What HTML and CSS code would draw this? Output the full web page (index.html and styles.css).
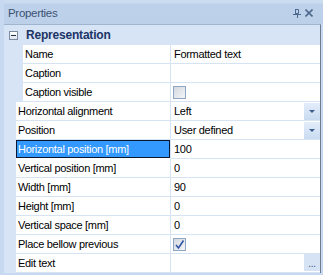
FILE: index.html
```html
<!DOCTYPE html>
<html lang="en">
<head>
  <meta charset="UTF-8" />
  <title>Properties</title>
  <link rel="stylesheet" href="styles.css">
</head>
<body>
  <div class="panel">

    <!-- Title bar with pin / close -->
    <div class="titlebar">
      <span class="title">Properties</span>
      <span class="tools">
        <svg width="8" height="9" viewBox="0 0 8 9" class="tool-icon">
          <path d="M2.5 0.5h3v4h-3z" fill="none" stroke="#4e6a8e"/>
          <path d="M2 0h1v5H2z" fill="#4e6a8e"/>
          <path d="M0 5h8v1H0zM4 6h1v3H4z" fill="#4e6a8e"/>
        </svg>
        <svg width="8" height="8" viewBox="0 0 8 8" class="tool-icon">
          <path d="M0.5 0.5l7 7M7.5 0.5l-7 7" stroke="#4e6a8e" stroke-width="1.6"/>
        </svg>
      </span>
    </div>

    <div class="grid">
      <div class="category">
        <span class="toggle"><span class="minus"></span></span>
        <span class="cat-name">Representation</span>
      </div>

      <div class="row sub"><div class="label">Name</div><div class="value">Formatted text</div></div>
      <div class="row sub"><div class="label">Caption</div><div class="value"></div></div>
      <div class="row sub"><div class="label">Caption visible</div><div class="value"><span class="check"></span></div></div>

      <div class="row"><div class="label">Horizontal alignment</div><div class="value">Left<span class="drop"><span class="arrow"></span></span></div></div>
      <div class="row"><div class="label">Position</div><div class="value">User defined<span class="drop"><span class="arrow"></span></span></div></div>
      <div class="row"><div class="label selected">Horizontal position [mm]</div><div class="value">100</div></div>
      <div class="row"><div class="label">Vertical position [mm]</div><div class="value">0</div></div>
      <div class="row"><div class="label">Width [mm]</div><div class="value">90</div></div>
      <div class="row"><div class="label">Height [mm]</div><div class="value">0</div></div>
      <div class="row"><div class="label">Vertical space [mm]</div><div class="value">0</div></div>
      <div class="row"><div class="label">Place bellow previous</div><div class="value"><span class="check checked">
        <svg width="11" height="11" viewBox="0 0 11 11"><path d="M2 6l2.5 3L9.5 1.5" fill="none" stroke="#2f55a4" stroke-width="1.6"/></svg>
      </span></div></div>
      <div class="row"><div class="label">Edit text</div><div class="value"><span class="dots">...</span></div></div>
    </div>

  </div>
</body>
</html>
```

FILE: styles.css
```css
body {
  margin: 0;
  padding: 0;
  font-family: "Liberation Sans", Arial, sans-serif;
  font-size: 11px;
  letter-spacing: -0.3px;
  background-color: #c6d9f0;
}
.panel {
  width: 323px;
  height: 275px;
  padding-left: 4px;
  box-sizing: border-box;
  overflow: hidden;
}
.titlebar {
  height: 24px;
  display: flex;
  align-items: center;
  justify-content: space-between;
  padding: 2px 10px 0 4px;
  box-sizing: border-box;
  background: linear-gradient(#cbdcf0 0, #cbdcf0 3px, #bed1ea 4px, #bcd0ea 100%);
}
.title {
  color: #3b5273;
  font-size: 11.5px;
}
.tools {
  display: flex;
  align-items: center;
  gap: 4px;
}
.tool-icon {
  display: block;
}
.grid {
  width: 317px;
  border-top: 1px solid #9fb4cf;
  border-right: 1px solid #6e7c8e;
  box-sizing: border-box;
  background-color: #d6e4f5;
}
.category {
  height: 20px;
  display: flex;
  align-items: center;
}
.toggle {
  width: 9px;
  height: 9px;
  margin-left: 5px;
  border: 1px solid #7b8ba1;
  box-sizing: border-box;
  background: linear-gradient(#ffffff, #dfe6ef);
  display: flex;
  align-items: center;
  justify-content: center;
}
.minus {
  width: 5px;
  height: 1px;
  background-color: #1f2f4a;
}
.cat-name {
  margin-left: 8px;
  font-weight: bold;
  font-size: 12px;
  color: #1c3466;
  letter-spacing: -0.2px;
}
.row {
  display: flex;
  height: 19px;
  padding-left: 12px;
}
.row.sub {
  padding-left: 19px;
}
.label {
  width: 155px;
  height: 19px;
  box-sizing: border-box;
  padding-left: 2px;
  line-height: 18px;
  background-color: #fff;
  color: #000;
  border-right: 1px solid #d6e3f3;
  border-bottom: 1px solid #d6e3f3;
  white-space: nowrap;
}
.row.sub .label {
  width: 148px;
}
.label.selected {
  background-color: #3399ff;
  color: #fff;
  box-shadow: inset 0 0 0 1px #0b1830;
  border-bottom-color: #fff;
}
.value {
  flex: 1;
  height: 19px;
  box-sizing: border-box;
  padding-left: 3px;
  line-height: 18px;
  background-color: #fff;
  border-bottom: 1px solid #d6e3f3;
  display: flex;
  align-items: center;
  position: relative;
}
.drop {
  position: absolute;
  right: 0;
  top: 1px;
  width: 16px;
  height: 17px;
  background: linear-gradient(#e3edf9, #c9dbf1);
  display: flex;
  align-items: center;
  justify-content: center;
}
.arrow {
  width: 0;
  height: 0;
  border-left: 3px solid transparent;
  border-right: 3px solid transparent;
  border-top: 3px solid #3b5d8f;
}
.check {
  width: 13px;
  height: 13px;
  margin-left: -1px;
  margin-top: 1px;
  box-sizing: border-box;
  border: 1px solid #8fa5c4;
  background: linear-gradient(135deg, #d4d9df, #f4f5f7);
  display: flex;
  align-items: center;
  justify-content: center;
}
.dots {
  position: absolute;
  right: 0;
  top: 0;
  width: 16px;
  height: 17px;
  background-color: #d5e3f4;
  color: #3b5273;
  font-size: 10px;
  text-align: center;
  line-height: 20px;
}
```
